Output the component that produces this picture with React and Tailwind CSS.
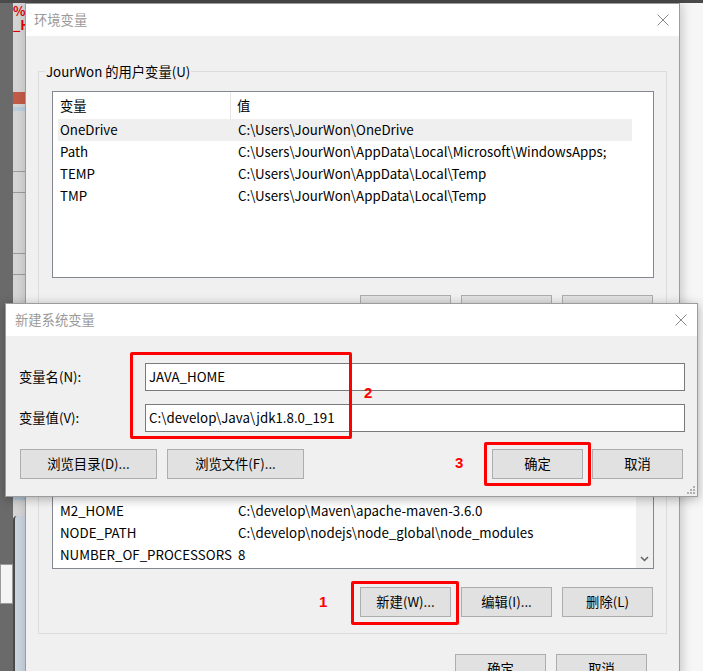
import clsx from "clsx";

const CloseX = () => (
  <svg width="12" height="12" viewBox="0 0 12 12" className="block">
    <path d="M0.5 0.5 L11.5 11.5 M11.5 0.5 L0.5 11.5" stroke="#8a8a8a" strokeWidth="1" fill="none" />
  </svg>
);

const Btn = ({ children, className }) => (
  <div
    className={clsx(
      "h-[30px] flex items-center justify-center bg-[#e1e1e1] border border-[#adadad] text-[13.3px] text-black whitespace-nowrap",
      className
    )}
  >
    {children}
  </div>
);

const Row = ({ name, value, selected, className }) => (
  <div
    className={clsx(
      "h-[22px] shrink-0 flex items-center text-[13.3px] text-black whitespace-nowrap",
      selected && "bg-[#efefef]",
      className
    )}
  >
    <span className="w-[178px] pl-[2px] overflow-hidden">{name}</span>
    <span className="pl-[2px]">{value}</span>
  </div>
);

const Header = () => (
  <div className="h-[27px] w-[579px] shrink-0 flex text-[13.3px] text-black">
    <div className="w-[178px] pl-[7px] flex items-center border-r border-[#e5e5e5]">变量</div>
    <div className="pl-[6px] flex items-center">值</div>
  </div>
);

const Group = ({ title, children }) => (
  <div className="border border-[#dcdcdc] pl-[13px] pr-[12px] pb-[16px] flex flex-col">
    <span className="-mt-[9px] -ml-[7px] px-[1px] self-start bg-[#f0f0f0] leading-[18px] text-[13.3px] text-black">
      {title}
    </span>
    {children}
  </div>
);

const ActionButtons = ({ className }) => (
  <div className={clsx("flex justify-end gap-[10px] pr-[1px]", className)}>
    <Btn className="w-[91px]">新建(W)...</Btn>
    <Btn className="w-[91px]">编辑(I)...</Btn>
    <Btn className="w-[91px]">删除(L)</Btn>
  </div>
);

const userVars = [
  ["OneDrive", "C:\\Users\\JourWon\\OneDrive"],
  ["Path", "C:\\Users\\JourWon\\AppData\\Local\\Microsoft\\WindowsApps;"],
  ["TEMP", "C:\\Users\\JourWon\\AppData\\Local\\Temp"],
  ["TMP", "C:\\Users\\JourWon\\AppData\\Local\\Temp"],
];

const sysVars = [
  ["ComSpec", "C:\\WINDOWS\\system32\\cmd.exe"],
  ["DriverData", "C:\\Windows\\System32\\Drivers\\DriverData"],
  ["M2_HOME", "C:\\develop\\Maven\\apache-maven-3.6.0"],
  ["NODE_PATH", "C:\\develop\\nodejs\\node_global\\node_modules"],
  ["NUMBER_OF_PROCESSORS", "8"],
];

const RedBox = ({ className }) => (
  <div className={clsx("absolute border-[3px] border-[#ff0000] rounded-[2px]", className)} />
);

const RedNum = ({ children, className }) => (
  <span
    className={clsx(
      "absolute font-['Liberation_Sans',sans-serif] font-bold text-[15px] leading-none text-[#ff0000]",
      className
    )}
  >
    {children}
  </span>
);

export default function App() {
  return (
    <div className="relative w-[703px] h-[671px] overflow-hidden bg-[#f6f6f6] font-['Noto_Sans_CJK_SC',sans-serif]">
      {/* desktop behind */}
      <div className="flex h-full">
        <div className="w-[13px] h-full bg-[#6a6a6a] flex flex-col">
          <div className="h-[564px]" />
          <div className="h-[40px] bg-[#f4f4f4] border border-[#9a9a9a]" />
        </div>
        <div className="w-[12px] h-full bg-[#d4d4d4] flex flex-col overflow-hidden">
          <span className="text-[13px] leading-[14px] text-[#e00000] font-bold pt-[4px] whitespace-nowrap">%</span>
          <span className="text-[13px] leading-[14px] text-[#e00000] font-bold whitespace-nowrap">_H</span>
          <div className="mt-[60px] h-[12px] bg-[#c25a48]" />
          <div className="mt-[3px] h-[4px] bg-[#b8cde0]" />
          <div className="mt-[60px] h-[1px] bg-[#9a9a9a]" />
          <div className="mt-[20px] h-[1px] bg-[#9a9a9a]" />
          <div className="mt-[60px] h-[1px] bg-[#9a9a9a]" />
          <div className="mt-[20px] h-[1px] bg-[#9a9a9a]" />
          <div className="mt-[180px] h-[1px] bg-[#9a9a9a]" />
          <div className="mt-[40px] h-[4px] bg-[#b8cde0]" />
          <div className="mt-[16px] flex-1 bg-[#c8d3de] border-l-2 border-[#4a4a4a] rounded-tl-[4px]" />
        </div>
        <div className="flex-1" />
      </div>
      <div className="absolute left-0 top-0 w-full h-[3px] bg-[#4a4a4a]" />

      {/* 环境变量 window */}
      <div className="absolute left-[25px] top-[3px] w-[655px] h-[700px] border border-[#9c9c9c] bg-[#f0f0f0] flex flex-col shadow-[2px_0_10px_rgba(0,0,0,0.2)]">
        <div className="h-[32px] shrink-0 bg-white flex items-center justify-between pl-[8px] pr-[10px]">
          <span className="text-[13.3px] text-[#9a9a9a]">环境变量</span>
          <CloseX />
        </div>
        <div className="px-[12px] pt-[35px] flex flex-col">
          <Group title="JourWon 的用户变量(U)">
            <div className="mt-[10px] h-[187px] border border-[#828790] bg-white flex flex-col">
              <Header />
              {userVars.map(([n, v], i) => (
                <Row key={n} name={n} value={v} selected={i === 0} className="ml-[5px] w-[574px]" />
              ))}
            </div>
            <ActionButtons className="mt-[17px]" />
          </Group>

          <div className="mt-[21px]">
            <Group title="系统变量(S)">
              <div className="mt-[10px] h-[186px] border border-[#828790] bg-white flex">
                <div className="flex-1 flex flex-col overflow-hidden">
                  <Header />
                  <div className="flex-1 overflow-hidden flex flex-col justify-end pb-[2px]">
                    {sysVars.map(([n, v]) => (
                      <Row key={n} name={n} value={v} className="ml-[5px] w-[574px]" />
                    ))}
                  </div>
                </div>
                <div className="w-[17px] bg-[#f0f0f0] flex flex-col justify-end items-center pb-[6px]">
                  <svg width="9" height="6" viewBox="0 0 9 6">
                    <path d="M1 1 L4.5 4.5 L8 1" stroke="#606060" strokeWidth="1.5" fill="none" />
                  </svg>
                </div>
              </div>
              <ActionButtons className="mt-[18px]" />
            </Group>
          </div>

          <div className="mt-[20px] flex justify-end gap-[10px] pr-[20px]">
            <Btn className="w-[91px]">确定</Btn>
            <Btn className="w-[91px]">取消</Btn>
          </div>
        </div>
      </div>

      {/* 新建系统变量 dialog */}
      <div className="absolute left-[5px] top-[303px] w-[693px] border border-[#9c9c9c] bg-[#f0f0f0] flex flex-col shadow-[0_2px_10px_rgba(0,0,0,0.3)]">
        <div className="h-[32px] bg-white flex items-center justify-between pl-[9px] pr-[10px]">
          <span className="text-[13.3px] text-[#9a9a9a]">新建系统变量</span>
          <CloseX />
        </div>
        <div className="relative pl-[13px] pr-[12px] pt-[27px] pb-[17px] flex flex-col">
          <div className="flex items-center">
            <span className="w-[126px] text-[13.3px] text-black">变量名(N):</span>
            <div className="flex-1 h-[28px] border border-[#7a7a7a] bg-white pl-[3px] flex items-center text-[13.3px] text-black">
              JAVA_HOME
            </div>
          </div>
          <div className="mt-[13px] flex items-center">
            <span className="w-[126px] text-[13.3px] text-black">变量值(V):</span>
            <div className="flex-1 h-[28px] border border-[#7a7a7a] bg-white pl-[3px] flex items-center text-[13.3px] text-black">
              C:\develop\Java\jdk1.8.0_191
            </div>
          </div>
          <div className="mt-[17px] flex items-center">
            <Btn className="ml-[1px] w-[137px]">浏览目录(D)...</Btn>
            <Btn className="ml-[10px] w-[137px]">浏览文件(F)...</Btn>
            <div className="flex-1" />
            <Btn className="w-[91px]">确定</Btn>
            <Btn className="ml-[9px] mr-[2px] w-[91px]">取消</Btn>
          </div>
          <svg width="8" height="8" viewBox="0 0 8 8" className="absolute right-[2px] bottom-[2px]">
            <g fill="#b0b0b0">
              <rect x="6" y="0" width="2" height="2" />
              <rect x="3" y="3" width="2" height="2" />
              <rect x="6" y="3" width="2" height="2" />
              <rect x="0" y="6" width="2" height="2" />
              <rect x="3" y="6" width="2" height="2" />
              <rect x="6" y="6" width="2" height="2" />
            </g>
          </svg>
        </div>
      </div>

      {/* annotations */}
      <RedBox className="left-[130px] top-[352px] w-[222px] h-[87px]" />
      <RedBox className="left-[484px] top-[442px] w-[107px] h-[44px]" />
      <RedBox className="left-[351px] top-[581px] w-[108px] h-[44px]" />
      <RedNum className="left-[364px] top-[385px]">2</RedNum>
      <RedNum className="left-[455px] top-[455px]">3</RedNum>
      <RedNum className="left-[319px] top-[594px]">1</RedNum>
    </div>
  );
}
